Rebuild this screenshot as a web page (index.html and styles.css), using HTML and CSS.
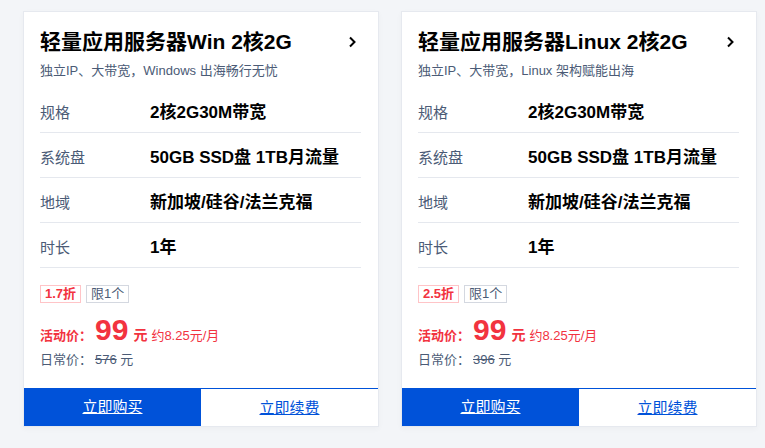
FILE: index.html
```html
<!DOCTYPE html>
<html lang="zh-CN">
<head>
  <meta charset="UTF-8">
  <meta name="viewport" content="width=device-width, initial-scale=1.0">
  <title>轻量应用服务器</title>
  <link rel="stylesheet" href="styles.css">
</head>
<body>
  <div class="cards">
    <div class="card">
      <div class="card-body">
        <div class="card-head">
          <h3 class="title">轻量应用服务器Win 2核2G</h3>
          <svg class="arrow" width="10" height="12" viewBox="0 0 10 12"><path d="M3 1.5 L7.5 6 L3 10.5" fill="none" stroke="#000" stroke-width="2"/></svg>
        </div>
        <p class="desc">独立IP、大带宽，Windows 出海畅行无忧</p>

        <div class="row"><span class="label">规格</span><span class="value">2核2G30M带宽</span></div>
        <div class="row"><span class="label">系统盘</span><span class="value">50GB SSD盘 1TB月流量</span></div>
        <div class="row"><span class="label">地域</span><span class="value">新加坡/硅谷/法兰克福</span></div>
        <div class="row"><span class="label">时长</span><span class="value">1年</span></div>

        <div class="tags">
          <span class="tag tag-red">1.7折</span>
          <span class="tag">限1个</span>
        </div>

        <div class="price">
          <span class="price-label">活动价：</span>
          <span class="price-num">99</span>
          <span class="price-unit">元</span>
          <span class="price-month">约8.25元/月</span>
        </div>
        <div class="old-price"><span class="price-label">日常价：</span><span class="old-num">576</span> 元</div>
      </div>
      <div class="actions">
        <a href="#" class="btn btn-buy">立即购买</a>
        <a href="#" class="btn btn-renew">立即续费</a>
      </div>
    </div>

    <div class="card">
      <div class="card-body">
        <div class="card-head">
          <h3 class="title">轻量应用服务器Linux 2核2G</h3>
          <svg class="arrow" width="10" height="12" viewBox="0 0 10 12"><path d="M3 1.5 L7.5 6 L3 10.5" fill="none" stroke="#000" stroke-width="2"/></svg>
        </div>
        <p class="desc">独立IP、大带宽，Linux 架构赋能出海</p>

        <div class="row"><span class="label">规格</span><span class="value">2核2G30M带宽</span></div>
        <div class="row"><span class="label">系统盘</span><span class="value">50GB SSD盘 1TB月流量</span></div>
        <div class="row"><span class="label">地域</span><span class="value">新加坡/硅谷/法兰克福</span></div>
        <div class="row"><span class="label">时长</span><span class="value">1年</span></div>

        <div class="tags">
          <span class="tag tag-red">2.5折</span>
          <span class="tag">限1个</span>
        </div>

        <div class="price">
          <span class="price-label">活动价：</span>
          <span class="price-num">99</span>
          <span class="price-unit">元</span>
          <span class="price-month">约8.25元/月</span>
        </div>
        <div class="old-price"><span class="price-label">日常价：</span><span class="old-num">396</span> 元</div>
      </div>
      <div class="actions">
        <a href="#" class="btn btn-buy">立即购买</a>
        <a href="#" class="btn btn-renew">立即续费</a>
      </div>
    </div>
  </div>
</body>
</html>
```

FILE: styles.css
```css
body {
  margin: 0;
  padding: 11px 23px;
  background-color: #f3f5f8;
  font-family: "Liberation Sans", "Noto Sans CJK SC", sans-serif;
  color: #000;
}
.cards {
  display: flex;
  gap: 22px;
}
.card {
  width: 356px;
  flex-shrink: 0;
  background-color: #fff;
  border: 1px solid #e6e9ef;
  box-sizing: border-box;
  box-shadow: 0 2px 6px rgba(0, 0, 0, 0.03);
}
.card-body {
  padding: 16px 17px 0 16px;
}
.card-head {
  display: flex;
  justify-content: space-between;
  align-items: center;
}
.title {
  margin: 0;
  font-size: 21px;
  line-height: 28px;
  font-weight: bold;
}
.arrow {
  margin-right: 4px;
}
.desc {
  margin: 6px 0 8px;
  font-size: 13px;
  line-height: 18px;
  color: #4b5b76;
}
.row {
  display: flex;
  padding: 14px 0 8px;
  line-height: 22px;
  border-bottom: 1px solid #e5e8ee;
}
.label {
  width: 110px;
  flex-shrink: 0;
  font-size: 15px;
  color: #4b5b76;
}
.value {
  font-size: 17px;
  font-weight: bold;
}
.tags {
  display: flex;
  gap: 5px;
  margin-top: 17px;
}
.tag {
  height: 18px;
  line-height: 16px;
  box-sizing: border-box;
  padding: 0 4px;
  font-size: 13px;
  color: #4b5b76;
  border: 1px solid #d4d8e0;
}
.tag-red {
  color: #f2333f;
  font-weight: bold;
  border-color: #ffc4c7;
}
.price {
  display: flex;
  align-items: baseline;
  margin-top: 11px;
  height: 32px;
  line-height: 32px;
  color: #f2333f;
}
.price-label {
  display: inline-block;
  width: 55px;
  font-size: 13px;
}
.price .price-label {
  font-weight: bold;
}
.price-num {
  font-size: 30px;
  font-weight: bold;
}
.price-unit {
  margin-left: 5px;
  font-size: 14px;
  font-weight: bold;
}
.price-month {
  margin-left: 4px;
  font-size: 13px;
}
.old-price {
  margin-top: 4px;
  font-size: 13px;
  height: 20px;
  line-height: 20px;
  color: #4b5b76;
}
.old-num {
  text-decoration: line-through;
}
.actions {
  display: flex;
  margin-top: 18px;
}
.btn {
  flex: 1;
  height: 38px;
  line-height: 38px;
  text-align: center;
  font-size: 15px;
  box-sizing: border-box;
}
.btn-buy {
  background-color: #0052d9;
  color: #fff;
}
.btn-renew {
  background-color: #fff;
  color: #0052d9;
  border-top: 1px solid #0052d9;
}
```
